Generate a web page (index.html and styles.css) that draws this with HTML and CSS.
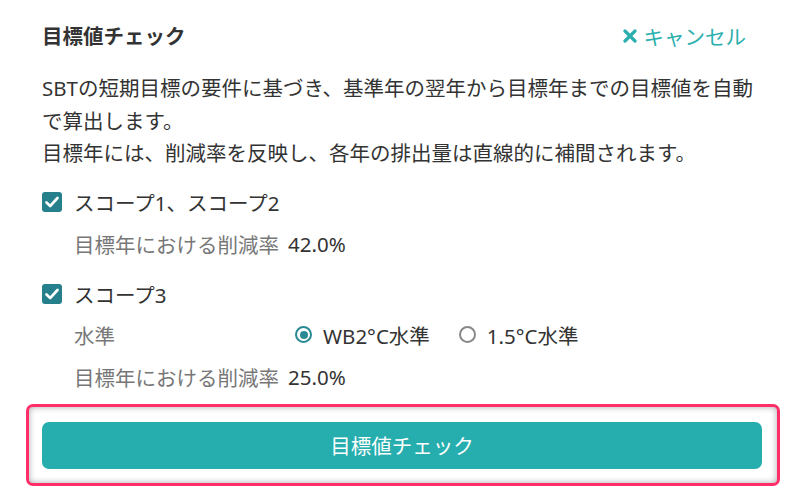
FILE: index.html
```html
<!DOCTYPE html>
<html lang="ja">
  <head>
    <meta charset="utf-8">
    <title>目標値チェック</title>
    <link rel="stylesheet" href="styles.css">
  </head>
  <body>
    <div class="panel">
      <div class="cabecalho">
        <h2 class="titulo">目標値チェック</h2>
        <a class="cancelar" href="#">
          <svg width="14" height="14" viewBox="0 0 14 14"><path d="M2 2 L12 12 M12 2 L2 12" stroke="#2aafae" stroke-width="3.2" stroke-linecap="round"/></svg>
          キャンセル
        </a>
      </div>

      <p class="descricao">SBTの短期目標の要件に基づき、基準年の翌年から目標年までの目標値を自動で算出します。<br>目標年には、削減率を反映し、各年の排出量は直線的に補間されます。</p>

      <div class="linha escopo">
        <span class="check"><svg width="14" height="12" viewBox="0 0 14 12"><path d="M1.5 6.5 L5.2 10 L12.5 2" fill="none" stroke="#fff" stroke-width="2.6" stroke-linecap="round" stroke-linejoin="round"/></svg></span>
        スコープ1、スコープ2
      </div>
      <div class="linha item taxa1">
        <span class="rotulo">目標年における削減率</span><span class="valor">42.0%</span>
      </div>

      <div class="linha escopo escopo3">
        <span class="check"><svg width="14" height="12" viewBox="0 0 14 12"><path d="M1.5 6.5 L5.2 10 L12.5 2" fill="none" stroke="#fff" stroke-width="2.6" stroke-linecap="round" stroke-linejoin="round"/></svg></span>
        スコープ3
      </div>
      <div class="linha item nivel">
        <span class="rotulo largo">水準</span>
        <span class="opcao"><span class="radio marcado"></span>WB2°C水準</span>
        <span class="opcao"><span class="radio"></span>1.5°C水準</span>
      </div>
      <div class="linha item taxa2">
        <span class="rotulo">目標年における削減率</span><span class="valor">25.0%</span>
      </div>

      <div class="destaque">
        <button class="botao">目標値チェック</button>
      </div>
    </div>
  </body>
</html>
```

FILE: styles.css
```css
* {
  margin: 0;
  box-sizing: border-box;
}

body {
  font-family: "Noto Sans", "Noto Sans CJK JP", sans-serif;
  color: #333;
  background: #fff;
}

.panel {
  padding: 20px 38px 0 42px;
  width: 800px;
}

.cabecalho {
  display: flex;
  justify-content: space-between;
  align-items: center;
  height: 32px;
}

.titulo {
  font-size: 20.5px;
  font-weight: bold;
  line-height: 32px;
  color: #333;
}

.cancelar {
  display: flex;
  align-items: center;
  gap: 7px;
  font-size: 20.5px;
  color: #2aafae;
  text-decoration: none;
  margin-right: 16px;
}

.descricao {
  margin-top: 20px;
  font-size: 20.5px;
  line-height: 32.5px;
  width: 720px;
}

.linha {
  display: flex;
  align-items: center;
  height: 32px;
  font-size: 20.5px;
}

.escopo {
  margin-top: 16px;
  gap: 12px;
}

.escopo3 {
  margin-top: 18px;
}

.check {
  width: 20px;
  height: 20px;
  border-radius: 3px;
  background: #25808c;
  display: flex;
  align-items: center;
  justify-content: center;
}

.item {
  padding-left: 32px;
}

.taxa1 {
  margin-top: 10px;
}

.nivel {
  margin-top: 9px;
}

.taxa2 {
  margin-top: 10px;
}

.rotulo {
  color: #777;
  margin-right: 9px;
}

.largo {
  width: 221px;
  margin-right: 0;
}

.opcao {
  display: flex;
  align-items: center;
  gap: 11px;
  margin-right: 29px;
}

.radio {
  width: 17px;
  height: 17px;
  border-radius: 50%;
  border: 2px solid #888;
  position: relative;
}

.radio.marcado {
  border-color: #2a8a93;
}

.radio.marcado::after {
  content: "";
  position: absolute;
  left: 2.5px;
  top: 2.5px;
  width: 8px;
  height: 8px;
  border-radius: 50%;
  background: #2a8a93;
}

.destaque {
  margin: 11px 0 0 -16px;
  width: 754px;
  height: 82px;
  border: 3px solid #ff2d68;
  border-radius: 7px;
  box-shadow: inset 0 0 6px rgba(0, 0, 0, 0.35);
  padding: 15px 15px 0 13px;
}

.botao {
  width: 720px;
  height: 47px;
  border: 0;
  border-radius: 7px;
  background: #26adad;
  color: #fff;
  font-family: "Noto Sans", "Noto Sans CJK JP", sans-serif;
  font-size: 20.5px;
  display: block;
}
```
